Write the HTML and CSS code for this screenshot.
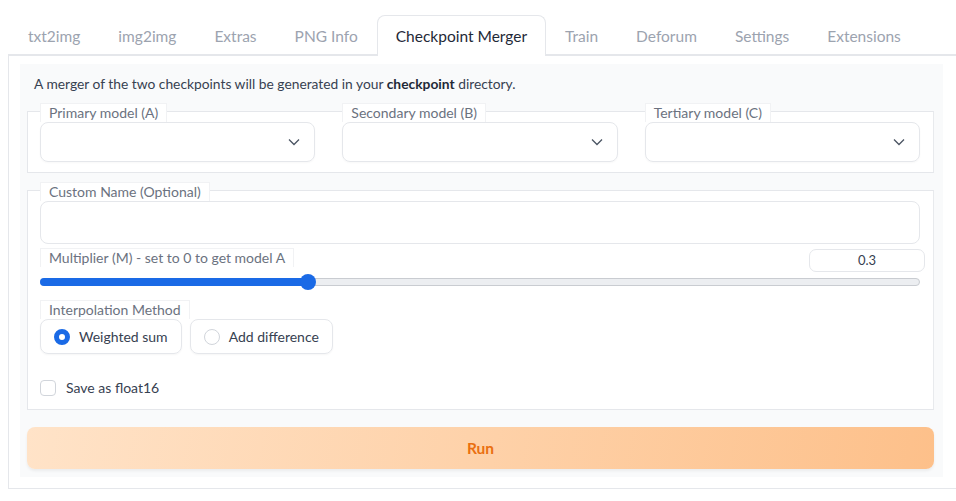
FILE: index.html
```html
<!DOCTYPE html>
<html lang="en">
<head>
  <meta charset="UTF-8">
  <meta name="viewport" content="width=device-width, initial-scale=1.0">
  <title>Checkpoint Merger</title>
  <link rel="stylesheet" href="styles.css">
</head>
<body>
  <div class="app">
    <nav class="tabs">
      <button class="tab">txt2img</button>
      <button class="tab">img2img</button>
      <button class="tab">Extras</button>
      <button class="tab">PNG Info</button>
      <button class="tab active">Checkpoint Merger</button>
      <button class="tab">Train</button>
      <button class="tab">Deforum</button>
      <button class="tab">Settings</button>
      <button class="tab">Extensions</button>
    </nav>

    <div class="panel">
      <div class="form">
        <p class="intro">A merger of the two checkpoints will be generated in your <b>checkpoint</b> directory.</p>

        <!-- model pickers -->
        <div class="block models">
          <div class="field">
            <span class="label">Primary model (A)</span>
            <div class="select">
              <svg viewBox="0 0 12 8" width="12" height="8"><path d="M1 1.5l5 5 5-5" fill="none" stroke="#4b5563" stroke-width="1.3"/></svg>
            </div>
          </div>
          <div class="field">
            <span class="label">Secondary model (B)</span>
            <div class="select">
              <svg viewBox="0 0 12 8" width="12" height="8"><path d="M1 1.5l5 5 5-5" fill="none" stroke="#4b5563" stroke-width="1.3"/></svg>
            </div>
          </div>
          <div class="field">
            <span class="label">Tertiary model (C)</span>
            <div class="select">
              <svg viewBox="0 0 12 8" width="12" height="8"><path d="M1 1.5l5 5 5-5" fill="none" stroke="#4b5563" stroke-width="1.3"/></svg>
            </div>
          </div>
        </div>

        <!-- options -->
        <div class="block options">
          <div class="field">
            <span class="label">Custom Name (Optional)</span>
            <div class="textbox"></div>
          </div>

          <div class="slider-head">
            <span class="label">Multiplier (M) - set to 0 to get model A</span>
            <div class="number">0.3</div>
          </div>
          <div class="track">
            <div class="fill" style="width: 30.5%"><span class="thumb"></span></div>
          </div>

          <div class="field method">
            <span class="label">Interpolation Method</span>
            <div class="radios">
              <label class="radio"><span class="dot checked"></span>Weighted sum</label>
              <label class="radio"><span class="dot"></span>Add difference</label>
            </div>
          </div>

          <label class="check"><span class="box"></span>Save as float16</label>
        </div>

        <button class="run">Run</button>
      </div>
    </div>
  </div>
</body>
</html>
```

FILE: styles.css
```css
body {
  margin: 0;
  font-family: "Lato", "Liberation Sans", sans-serif;
  background: #fff;
  overflow: hidden;
}
.app {
  padding: 15px 0 0 8px;
  width: 960px;
}
.tabs {
  display: flex;
  border-bottom: 2px solid #e5e7eb;
  height: 39px;
  padding-left: 1px;
}
.tab {
  font-family: inherit;
  font-size: 15.5px;
  color: #9ca3af;
  background: none;
  border: 1px solid transparent;
  border-bottom: none;
  padding: 0 18px;
  height: 41px;
  margin-bottom: -2px;
}
.tab.active {
  color: #1f2937;
  background: #fff;
  border-color: #e5e7eb;
  border-radius: 8px 8px 0 0;
}
.panel {
  border: 1px solid #e5e7eb;
  border-top: none;
  padding: 8px 0 11px 11px;
}
.form {
  width: 907px;
  background: #f9fafb;
  padding: 0 9px 8px 7px;
}
.intro {
  margin: 0;
  padding: 10px 7px 0;
  height: 20px;
  line-height: 20px;
  font-size: 13.8px;
  color: #374151;
}
.intro b {
  font-weight: 700;
  color: #1f2937;
}
.block {
  background: #fff;
  border: 1px solid #e5e7eb;
  border-right-color: #e8eaed;
  padding: 0 13px 10px 12px;
}
.models {
  margin-top: 17px;
  display: flex;
  gap: 27px;
}
.models .field {
  flex: 1;
}
.field {
  display: flex;
  flex-direction: column;
  align-items: flex-start;
}
.label {
  display: inline-block;
  margin-top: -9px;
  height: 18px;
  line-height: 18px;
  padding: 0 8px;
  background: #fff;
  border: 1px solid #f1f2f4;
  border-bottom: none;
  font-size: 14px;
  color: #6b7280;
}
.select {
  box-sizing: border-box;
  align-self: stretch;
  height: 40px;
  border: 1px solid #e5e7eb;
  border-radius: 8px;
  display: flex;
  align-items: center;
  justify-content: flex-end;
  padding-right: 14px;
  box-shadow: 0 1px 2px rgba(0, 0, 0, 0.03);
}
.options {
  margin-top: 17px;
  padding-bottom: 13px;
}
.textbox {
  box-sizing: border-box;
  align-self: stretch;
  height: 43px;
  border: 1px solid #e5e7eb;
  border-radius: 8px;
}
.slider-head {
  display: flex;
  justify-content: space-between;
  align-items: flex-start;
  margin-top: 12px;
  margin-right: -5px;
}
.slider-head .label {
  margin-top: -8px;
}
.number {
  box-sizing: border-box;
  width: 116px;
  height: 23px;
  margin-top: -7px;
  border: 1px solid #e5e7eb;
  border-radius: 7px;
  text-align: center;
  line-height: 21px;
  font-size: 13px;
  color: #374151;
}
.track {
  box-sizing: border-box;
  height: 8px;
  margin-top: 6px;
  border: 1px solid #c9ccd1;
  border-radius: 4px;
  background: #eceef1;
}
.fill {
  position: relative;
  height: 8px;
  margin: -1px 0 0 -1px;
  background: #1a6ae6;
  border-radius: 4px;
}
.thumb {
  position: absolute;
  right: -8px;
  top: -4px;
  width: 16px;
  height: 16px;
  border-radius: 50%;
  background: #1a6ae6;
}
.method {
  margin-top: 23px;
}
.radios {
  display: flex;
  gap: 8px;
}
.radio {
  box-sizing: border-box;
  height: 35px;
  display: flex;
  align-items: center;
  gap: 9px;
  padding: 0 13px 0 13px;
  border: 1px solid #e5e7eb;
  border-radius: 8px;
  font-size: 14px;
  color: #374151;
  box-shadow: 0 1px 2px rgba(0, 0, 0, 0.04);
}
.dot {
  box-sizing: border-box;
  width: 16px;
  height: 16px;
  border-radius: 50%;
  border: 1px solid #d1d5db;
  background: #fff;
}
.dot.checked {
  border: 5px solid #1a6ae6;
}
.check {
  display: flex;
  align-items: center;
  gap: 10px;
  margin-top: 25px;
  font-size: 14px;
  color: #374151;
}
.box {
  box-sizing: border-box;
  width: 16px;
  height: 16px;
  border: 1px solid #d1d5db;
  border-radius: 4px;
  background: #fff;
}
.run {
  display: block;
  width: 100%;
  height: 42px;
  margin-top: 17px;
  border: none;
  border-radius: 8px;
  background: linear-gradient(100deg, #ffe3c8, #fdc08a);
  box-shadow: 0 2px 3px rgba(0, 0, 0, 0.06);
  font-family: inherit;
  font-size: 15.5px;
  font-weight: 700;
  color: #ea6f10;
}
```
